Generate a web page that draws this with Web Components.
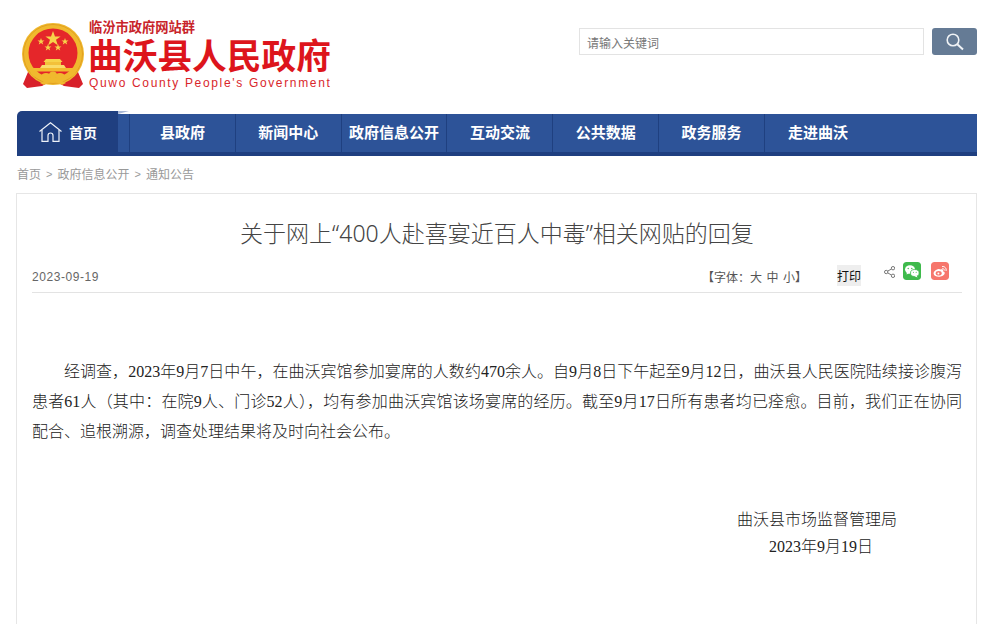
<!DOCTYPE html>
<html lang="zh-CN">
<head>
<meta charset="utf-8">
<title>关于网上“400人赴喜宴近百人中毒”相关网贴的回复</title>
<style>
html,body{margin:0;padding:0;background:#fff;overflow:hidden;height:624px}
body{font-family:"Noto Sans CJK SC","Liberation Sans",sans-serif;}
#page{width:961px;height:624px;overflow:hidden;margin-left:16px}
</style>
</head>
<body>
<div id="page">
<gov-header></gov-header>
<gov-nav></gov-nav>
<gov-crumbs></gov-crumbs>
<gov-article>
<p class="indent">经调查，2023年9月7日中午，在曲沃宾馆参加宴席的人数约470余人。自9月8日下午起至9月12日，曲沃县人民医院陆续接诊腹泻患者61人（其中：在院9人、门诊52人），均有参加曲沃宾馆该场宴席的经历。截至9月17日所有患者均已痊愈。目前，我们正在协同配合、追根溯源，调查处理结果将及时向社会公布。</p>
</gov-article>
</div>
<script>
function def(name, html){
  customElements.define(name, class extends HTMLElement{
    constructor(){super();this.attachShadow({mode:'open'}).innerHTML=html;}
  });
}
def('gov-emblem',`<style>:host{display:block;width:66px;height:68px;flex:none}svg{display:block}</style>
<svg width="66" height="68" viewBox="0 0 66 68">
<path d="M8 50 L3 62 L7 66 L22 64 L33 58 L44 64 L59 66 L63 62 L58 50 Z" fill="#d8202a"/>
<circle cx="33" cy="32" r="31" fill="#f0b92e"/>
<circle cx="33" cy="32" r="29.5" fill="none" stroke="#e2a020" stroke-width="1"/>
<circle cx="33" cy="31" r="24.5" fill="#e5262a"/>
<g fill="#f7d34a">
<polygon points="33,9 35,14.4 40.6,14.4 36,17.8 37.8,23.2 33,20 28.2,23.2 30,17.8 25.4,14.4 31,14.4"/>
<polygon points="21,16 21.9,18.5 24.5,18.5 22.4,20 23.2,22.5 21,21 18.8,22.5 19.6,20 17.5,18.5 20.1,18.5"/>
<polygon points="45,16 45.9,18.5 48.5,18.5 46.4,20 47.2,22.5 45,21 42.8,22.5 43.6,20 41.5,18.5 44.1,18.5"/>
<polygon points="28,22 28.9,24.5 31.5,24.5 29.4,26 30.2,28.5 28,27 25.8,28.5 26.6,26 24.5,24.5 27.1,24.5"/>
<polygon points="38,22 38.9,24.5 41.5,24.5 39.4,26 40.2,28.5 38,27 35.8,28.5 36.6,26 34.5,24.5 37.1,24.5"/>
<path d="M26 37 L40 37 L42.5 40 L23.5 40 Z"/>
<rect x="25" y="40" width="16" height="3" fill="#f3c13a"/>
<path d="M22 43 L44 43 L46 46 L20 46 Z" fill="#f9dc6a"/>
<rect x="13" y="46" width="40" height="3.5" fill="#f3b92e"/>
</g>
<g fill="#f0b92e">
<ellipse cx="33" cy="53" rx="4" ry="3.5"/>
<ellipse cx="26" cy="54" rx="5" ry="3"/>
<ellipse cx="40" cy="54" rx="5" ry="3"/>
<ellipse cx="15" cy="52" rx="5" ry="2.6" transform="rotate(30 15 52)"/>
<ellipse cx="51" cy="52" rx="5" ry="2.6" transform="rotate(-30 51 52)"/>
<path d="M20 61 L30 56 L36 56 L46 61 L42 63 L33 59 L24 63 Z"/>
</g>
</svg>`);
def('gov-logo',`<style>
:host{display:flex;align-items:flex-start;gap:2px;font-family:"Noto Sans CJK SC",sans-serif;color:#d9161c}
gov-emblem{margin-top:3px}
.t{display:flex;flex-direction:column;margin-top:-1px}
.a{font-size:13.25px;font-weight:700;line-height:18px;color:#c8242a;margin-left:1px;white-space:nowrap}
.b{font-size:34.7px;font-weight:700;line-height:38px;margin-top:-1px;white-space:nowrap;color:#dd151c}
.c{font:12px/14px "Liberation Sans",sans-serif;letter-spacing:1.66px;margin:3px 0 0 1px;white-space:nowrap;color:#d9262b}
</style><gov-emblem></gov-emblem><div class="t"><div class="a">临汾市政府网站群</div><div class="b">曲沃县人民政府</div><div class="c">Quwo County People's Government</div></div>`);
def('gov-search',`<style>
:host{display:flex;gap:8px;align-items:flex-start}
.i{height:25px;border:1px solid #e3e3e3;background:#fff;font-size:12px;line-height:27px;color:#777;padding-left:7px;box-sizing:content-box;width:336px}
.b{width:45px;height:27px;background:#657b95;border-radius:3px;display:flex;align-items:center;justify-content:center}
</style><div class="i">请输入关键词</div><div class="b"><svg width="20" height="20" viewBox="0 0 20 20" fill="none" stroke="#f0f3f6" stroke-width="1.6"><circle cx="8" cy="8" r="5.8"/><path d="M12.3 12.3 L18 17.6" stroke-width="2"/></svg></div>`);
def('gov-header',`<style>
:host{display:flex;justify-content:space-between;align-items:flex-start;height:111px;box-sizing:border-box;padding:18px 0 0 4px}
gov-search{margin-top:10px}
</style><gov-logo style="margin-top:1px"></gov-logo><gov-search></gov-search>`);
def('gov-nav',`<style>
:host{display:flex;height:45px;margin-left:1px;font-family:"Noto Sans CJK SC",sans-serif;color:#fff;font-weight:700;position:relative}
.home{width:101px;background:#1f3f80;border-radius:5px 0 0 0;display:flex;align-items:center;padding-left:22px;box-sizing:border-box;font-size:14px;gap:7px;padding-bottom:3px}
.rest{flex:1;display:flex;flex-direction:column;padding-top:3px}
.row{flex:1;display:flex;background:#2d5398}
.bar{height:4px;background:#1f3f80}
.stub{width:12px;box-sizing:border-box;border-right:1px solid #1f4080}
.cell{width:105.83px;box-sizing:border-box;border-right:1px solid #1f4080;display:flex;align-items:center;justify-content:center;font-size:15px;white-space:nowrap;padding-bottom:3px}
.tri{position:absolute;left:101px;top:0;width:0;height:0;border-left:11px solid #a9b8d6;border-top:0 solid transparent;border-bottom:3px solid transparent}
</style>
<div class="home"><svg width="23" height="20" viewBox="0 0 23 20" fill="none" stroke="#eef2f8" stroke-width="1.2"><path d="M0.5 9.5 L11.5 0.8 L22.5 9.5"/><path d="M3 8 V19.4 H9 V13.5 Q9 11 11.5 11 Q14 11 14 13.5 V19.4 H20 V8"/></svg><span>首页</span></div>
<div class="tri"></div>
<div class="rest"><div class="row"><div class="stub"></div>
<div class="cell">县政府</div><div class="cell">新闻中心</div><div class="cell">政府信息公开</div><div class="cell">互动交流</div><div class="cell">公共数据</div><div class="cell">政务服务</div><div class="cell" style="border:0">走进曲沃</div>
</div><div class="bar"></div></div>`);
def('gov-crumbs',`<style>
:host{display:flex;align-items:center;height:37px;margin-left:1px;font-size:12px;color:#999;gap:5px;white-space:nowrap;padding-bottom:2px;box-sizing:border-box}
i{font:normal 11px "Liberation Sans",sans-serif;color:#999}
</style><span>首页</span><i>&gt;</i><span>政府信息公开</span><i>&gt;</i><span>通知公告</span>`);
def('gov-meta',`<style>
:host{display:flex;align-items:center;height:42px;border-bottom:1px solid #e3e3e3;font-size:12px;color:#666;position:relative;box-sizing:content-box}
.d{font:12px "Liberation Sans",sans-serif;letter-spacing:.55px;color:#666;padding-top:12px}
.f{margin-left:auto;white-space:nowrap;padding-top:10px;color:#555;display:flex}
.f b{font-weight:400;margin-left:4.5px}
.f b:first-of-type{margin-left:0}
.p{margin-left:30px;width:24px;height:21px;background:#eee;color:#111;line-height:22px;text-align:center;margin-top:9px}
.s{margin-left:23px;display:block;margin-top:2px}
.w{margin-left:8px;width:18px;height:18px;border-radius:3px;display:block;margin-top:-1px}
.w2{margin-left:10px;margin-right:13px}
</style>
<span class="d">2023-09-19</span>
<span class="f"><span>【字体：</span><b>大</b><b>中</b><b>小</b><span>】</span></span>
<span class="p">打印</span>
<svg class="s" width="11" height="12" viewBox="0 0 11 12" fill="none" stroke="#777" stroke-width="1"><circle cx="9" cy="2.2" r="1.7"/><circle cx="2.2" cy="6" r="1.7"/><circle cx="9" cy="9.8" r="1.7"/><path d="M3.7 5.1 L7.5 3 M3.7 6.9 L7.5 9"/></svg>
<svg class="w" viewBox="0 0 18 18"><rect width="18" height="18" rx="3" fill="#3fba4c"/><ellipse cx="7" cy="7.5" rx="5" ry="4.2" fill="#fff"/><path d="M4 10 L3.6 12.6 L6.5 11Z" fill="#fff"/><ellipse cx="11.8" cy="11" rx="4.3" ry="3.5" fill="#fff" stroke="#3fba4c" stroke-width=".8"/><path d="M13.5 13.5 L14.6 15.4 L11.6 14.2Z" fill="#fff"/><circle cx="5.2" cy="6.5" r=".7" fill="#3fba4c"/><circle cx="8.8" cy="6.5" r=".7" fill="#3fba4c"/><circle cx="10.4" cy="10.3" r=".55" fill="#3fba4c"/><circle cx="13.2" cy="10.3" r=".55" fill="#3fba4c"/></svg>
<svg class="w w2" viewBox="0 0 18 18"><rect width="18" height="18" rx="3" fill="#f6766c"/><path d="M7.8 7 C4.5 7.6 2.3 9.8 2.7 12 C3.2 14.3 6.5 15.2 9.5 14.6 C12.3 14 14 12.4 13.7 10.7 C13.5 9.7 12.5 9.6 12 9.3 C12.5 8 12 6.9 9.8 7.5 Z" fill="#fff"/><ellipse cx="7.7" cy="11.2" rx="3" ry="2.3" fill="#f6766c"/><circle cx="7.4" cy="11.4" r="1" fill="#fff"/><path d="M11 4.6 C13.6 4 15.8 6.3 15 9 M11.3 6.6 C12.5 6.3 13.6 7.4 13.2 8.6" stroke="#fff" stroke-width="1" fill="none"/></svg>`);
def('gov-article',`<style>
:host{display:block;border:1px solid #e6e6e6;padding:0 14px 0 15px;height:600px;box-sizing:border-box;width:961px;flex:none}
h1{margin:0;padding-top:22px;height:34px;font:300 23px/34px "Noto Sans","Noto Sans CJK SC",sans-serif;color:#444;text-align:center;white-space:nowrap}
.body{padding-top:64px}
::slotted(p){margin:0;text-indent:2em;font:300 16px/30px "Liberation Serif","Noto Sans CJK SC",serif;color:#222;text-align:justify}
.sign{margin-top:59px;display:flex;justify-content:flex-end;padding-right:65px;text-align:center;font:300 16px/27px "Liberation Serif","Noto Sans CJK SC",serif;color:#222}
.sign span{display:block;padding-left:8px}
</style>
<h1>关于网上“400人赴喜宴近百人中毒”相关网贴的回复</h1>
<gov-meta></gov-meta>
<div class="body"><slot></slot></div>
<div class="sign"><div>曲沃县市场监督管理局<span>2023年9月19日</span></div></div>`);
</script>
</body>
</html>
